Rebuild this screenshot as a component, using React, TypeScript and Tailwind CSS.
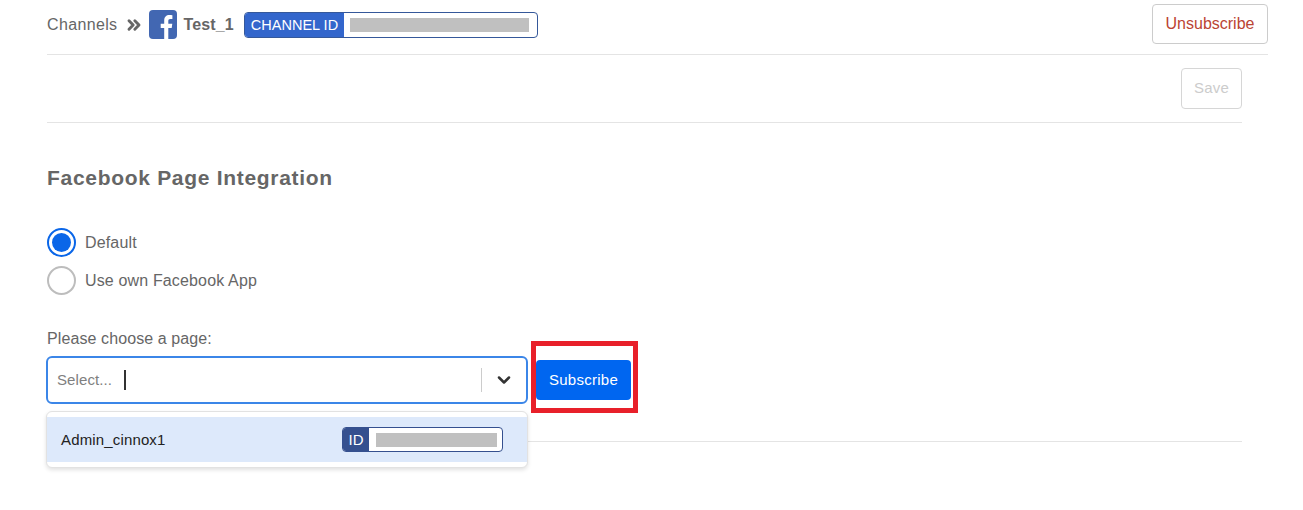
/**
 * Facebook channel settings page
 * Page integration form with the page select opened
 */

import { ChevronDown, ChevronsRight } from 'lucide-react';

function FacebookIcon() {
  return (
    <svg width="28" height="29" viewBox="0 0 28 29" className="shrink-0 mt-[1px]">
      <rect width="28" height="29" rx="4" fill="#4267b2" />
      <path
        d="M19.3 29V18h3.4l.6-4.3h-4v-2.6c0-1.3.4-2.1 2.1-2.1h2V5.2c-.4-.1-1.700-.2-3-.2-3.100 0-5.200 1.900-5.200 5.400v3.300h-3.500V18h3.500v11z"
        fill="#fff"
      />
    </svg>
  );
}

function HiddenValue({ className }: { className: string }) {
  return <div className={`bg-[#c0c0c0] ${className}`} />;
}

export default function App() {
  return (
    <div className="w-[1303px] h-[510px] overflow-hidden bg-white font-['Liberation_Sans',Arial,sans-serif] text-[#666666]">
      <div className="ml-[47px] w-[1221px]">
        {/* Header */}
        <div className="h-[55px] pt-[4px] border-b border-[#e4e4e4] flex justify-between">
          <div className="h-[40px] flex items-center">
            <span className="text-base tracking-[0.35px] mt-[1px]">Channels</span>
            <ChevronsRight className="w-[20px] h-[20px] ml-[7px] mr-[5px] mt-[2px] text-[#666666]" strokeWidth={3.5} />
            <FacebookIcon />
            <span className="text-base font-bold tracking-[0.15px] ml-[6px] mt-[1px]">Test_1</span>
            <div className="ml-[10px] mt-[1px] w-[294px] h-[26px] border border-[#35589a] rounded-[4px] flex items-center overflow-hidden">
              <span className="h-full w-[99px] bg-[#3366cc] text-white text-[14.5px] leading-[24px] pl-[6px] shrink-0">
                CHANNEL ID
              </span>
              <HiddenValue className="ml-[6px] w-[179px] h-[14px]" />
            </div>
          </div>
          <button className="w-[116px] h-[40px] border border-[#cccccc] rounded-[4px] text-base text-[#bb4433] bg-white">
            Unsubscribe
          </button>
        </div>

        <div className="w-[1195px]">
          {/* Save bar */}
          <div className="h-[68px] pt-[13px] border-b border-[#e4e4e4] flex justify-end">
            <button className="w-[61px] h-[41px] border border-[#d6d6d6] rounded-[4px] text-[15px] tracking-[0.2px] text-[#cccccc] bg-white">
              Save
            </button>
          </div>

          {/* Form */}
          <h2 className="mt-[43px] text-[21px] leading-[24px] font-bold tracking-[0.7px]">Facebook Page Integration</h2>

          <div className="mt-[38px] flex items-center h-[29px]">
            <div className="w-[29px] h-[29px] rounded-full border-2 border-[#0a66e8] flex items-center justify-center">
              <div className="w-[19px] h-[19px] rounded-full bg-[#0a66e8]" />
            </div>
            <span className="ml-[9px] text-base tracking-[0.15px]">Default</span>
          </div>
          <div className="mt-[9px] flex items-center h-[29px]">
            <div className="w-[29px] h-[29px] rounded-full border-2 border-[#bdbdbd]" />
            <span className="ml-[9px] text-base tracking-[0.15px]">Use own Facebook App</span>
          </div>

          <div className="mt-[35px] text-base leading-[18px] tracking-[0.1px]">Please choose a page:</div>

          <div className="mt-[8px] pb-[37px] border-b border-[#e4e4e4] flex items-center">
            <div className="relative -ml-px">
              <div className="w-[482px] h-[48px] border-2 border-[#3b86e8] rounded-[6px] bg-white flex items-center pl-[9px]">
                <span className="text-[15px] tracking-[0.1px] text-[#808080]">Select...</span>
                <div className="ml-[12px] w-[2px] h-[20px] bg-[#333333]" />
                <div className="ml-auto w-px h-[24px] bg-[#cccccc]" />
                <ChevronDown className="w-[20px] h-[20px] mx-[12px] text-[#333333]" strokeWidth={3} />
              </div>

              {/* Open menu */}
              <div className="absolute left-0 top-[55px] w-[482px] h-[57px] border border-[#e2e2e2] rounded-[6px] bg-white shadow-[0_2px_4px_rgba(0,0,0,0.12)] pt-[5px]">
                <div className="h-[45px] bg-[#dde9fb] flex items-center pl-[14px] pr-[24px] justify-between">
                  <span className="text-[15px] tracking-[0.15px] text-[#222222] mt-[1px]">Admin_cinnox1</span>
                  <div className="w-[161px] h-[25px] border border-[#35508f] rounded-[4px] bg-white flex items-center overflow-hidden">
                    <span className="w-[26px] h-full bg-[#35508f] text-white text-[15px] leading-[23px] text-center shrink-0">ID</span>
                    <HiddenValue className="ml-[7px] w-[121px] h-[14px]" />
                  </div>
                </div>
              </div>
            </div>

            <div className="relative ml-[8px]">
              <button className="block w-[95px] h-[40px] rounded-[4px] bg-[#0066f0] text-white text-[15px] tracking-[0.25px]">Subscribe</button>
              {/* Red annotation frame */}
              <div className="absolute left-[-5px] top-[-19px] w-[107px] h-[72px] border-[5px] border-[#e8202a]" />
            </div>
          </div>
        </div>
      </div>
    </div>
  );
}
